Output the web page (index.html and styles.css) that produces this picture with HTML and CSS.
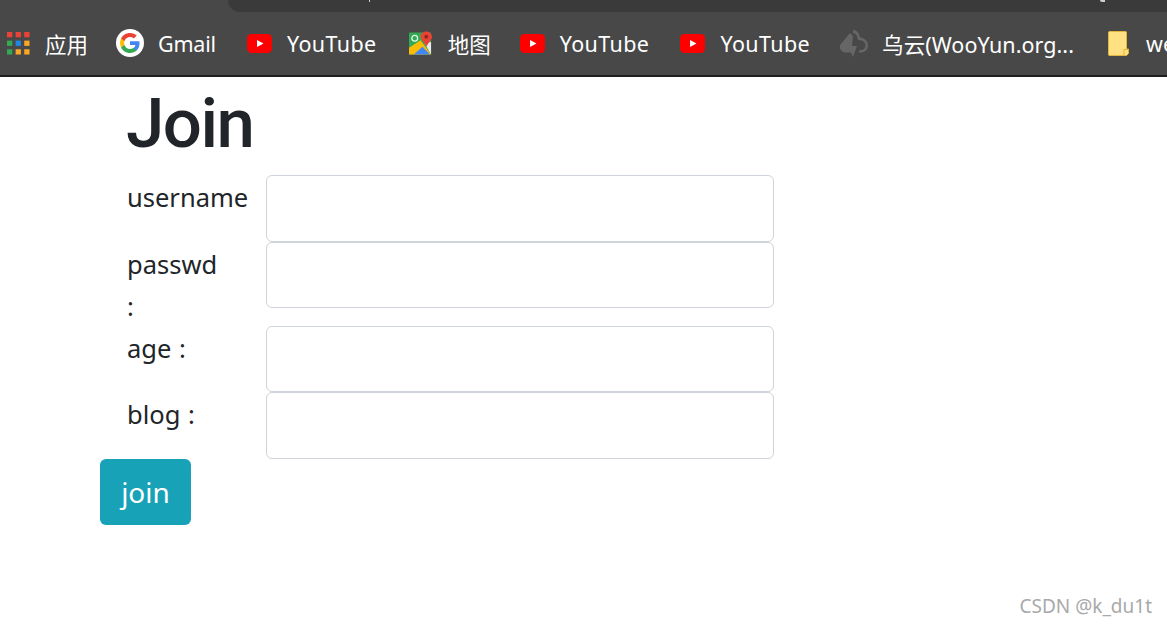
FILE: index.html
```html
<!DOCTYPE html>
<html lang="zh">
<head>
<meta charset="utf-8">
<title>Join</title>
<link rel="stylesheet" href="styles.css">
</head>
<body>
<header class="chrome">
  <div class="topline">
    <div class="address">
      <span class="mark mark-a"></span>
      <span class="mark mark-b"></span>
    </div>
  </div>
  <nav class="bookmarks">
    <a class="bm bm-apps">
      <svg class="ico-apps" viewBox="0 0 24 24" width="23" height="23">
        <g>
          <rect x="0" y="0" width="5.5" height="5.5" fill="#ea4335"/><rect x="9" y="0" width="5.5" height="5.5" fill="#ea4335"/><rect x="18" y="0" width="5.5" height="5.5" fill="#ea4335"/>
          <rect x="0" y="9" width="5.5" height="5.5" fill="#34a853"/><rect x="9" y="9" width="5.5" height="5.5" fill="#1e88e5"/><rect x="18" y="9" width="5.5" height="5.5" fill="#f9a825"/>
          <rect x="0" y="18" width="5.5" height="5.5" fill="#34a853"/><rect x="9" y="18" width="5.5" height="5.5" fill="#f9a825"/><rect x="18" y="18" width="5.5" height="5.5" fill="#f9a825"/>
        </g>
      </svg>
      <span>应用</span>
    </a>
    <a class="bm bm-gmail">
      <svg viewBox="0 0 28 28" width="28" height="28">
        <circle cx="14" cy="14" r="14" fill="#fff"/>
        <path d="M23.500 14.200c0-.7-.1-1.400-.2-2H14v3.800h5.400c-.2 1.200-.9 2.300-2 3v2.500h3.200c1.900-1.700 2.900-4.300 2.900-7.300z" fill="#4285f4"/>
        <path d="M14 24c2.700 0 4.900-.9 6.600-2.500l-3.200-2.500c-.9.600-2 1-3.400 1-2.600 0-4.800-1.800-5.600-4.100H5.100v2.600C6.700 21.800 10.100 24 14 24z" fill="#34a853"/>
        <path d="M8.400 15.900c-.4-1.200-.4-2.600 0-3.800V9.500H5.100c-1.400 2.800-1.400 6.200 0 9l3.300-2.600z" fill="#fbbc05"/>
        <path d="M14 8c1.500 0 2.800.5 3.800 1.500l2.900-2.900C19 5 16.700 4 14 4 10.100 4 6.700 6.200 5.100 9.500l3.300 2.600C9.200 9.800 11.400 8 14 8z" fill="#ea4335"/>
      </svg>
      <span>Gmail</span>
    </a>
    <a class="bm bm-yt1">
      <svg viewBox="0 0 25 19" width="25" height="19"><rect width="25" height="19" rx="4.500" fill="#f00"/><path d="M10 6l6.500 3.500L10 13z" fill="#fff"/></svg>
      <span>YouTube</span>
    </a>
    <a class="bm bm-maps">
      <svg viewBox="0 0 24 24" width="23" height="24">
        <rect y="1" width="23" height="23" rx="1" fill="#34a853"/>
        <path d="M0 24V17L12 9l11 15z" fill="#fbbc05"/>
        <path d="M5 24l9-8 8 8z" fill="#4285f4"/>
        <path d="M16 12l7 12V11z" fill="#e8e8e8"/>
        <circle cx="6" cy="7" r="3" fill="none" stroke="#dfe" stroke-width="1.300"/>
        <path d="M18 0c3 0 6 2.300 6 5.500 0 3-3 5-6 10.500-2-5.500-6-7.500-6-10.500C12 2.300 15 0 18 0z" fill="#ea4335"/>
        <circle cx="18" cy="5.500" r="2" fill="#8c2b20"/>
      </svg>
      <span>地图</span>
    </a>
    <a class="bm bm-yt2">
      <svg viewBox="0 0 25 19" width="25" height="19"><rect width="25" height="19" rx="4.500" fill="#f00"/><path d="M10 6l6.500 3.500L10 13z" fill="#fff"/></svg>
      <span>YouTube</span>
    </a>
    <a class="bm bm-yt3">
      <svg viewBox="0 0 25 19" width="25" height="19"><rect width="25" height="19" rx="4.500" fill="#f00"/><path d="M10 6l6.500 3.500L10 13z" fill="#fff"/></svg>
      <span>YouTube</span>
    </a>
    <a class="bm bm-wooyun">
      <svg viewBox="0 0 28 27" width="28" height="27">
        <path d="M13 0c3 0 5.500 2 6.500 5.500 0 1 .5 2 1.500 2 3.500 1 7 3.500 7 8 0 4-3 7-7 7h-2.500l1-2.500H21c2.500 0 4.500-2 4.500-4.500s-2-5-5.500-5.300l-2-.2-.500-2.500c-.7-2.500-2-4-4.500-4.500z" fill="#666"/>
        <path d="M10 3L0 15c-1 3 1 7 5 7.500h6l2 4.500 4-11h-5l1-10z" fill="#666"/>
      </svg>
      <span>乌云(WooYun.org...</span>
    </a>
    <a class="bm bm-folder">
      <svg viewBox="0 0 21 25" width="21" height="25">
        <path d="M1.500.500h16a1 1 0 0 1 1 1V18h2v4.500l-2 2h-17a1 1 0 0 1-1-1v-22a1 1 0 0 1 1-1z" fill="#ffe083" stroke="#e0b63c"/>
        <path d="M16 24v-5.500h4.500" fill="#ffe083" stroke="#e0b63c"/>
      </svg>
      <span>web</span>
    </a>
  </nav>
</header>

<main class="page">
  <h1 class="title">Join</h1>
  <form class="join-form">
    <div class="row row-first">
      <label class="field-label">username</label>
      <input class="field-input" type="text">
    </div>
    <div class="row">
      <label class="field-label">passwd :</label>
      <input class="field-input" type="password">
    </div>
    <div class="row">
      <label class="field-label">age :</label>
      <input class="field-input" type="text">
    </div>
    <div class="row">
      <label class="field-label">blog :</label>
      <input class="field-input" type="text">
    </div>
    <button class="join-btn" type="button">join</button>
  </form>
</main>

<div class="watermark">CSDN @k_du1t</div>
</body>
</html>
```
FILE: styles.css
```css
* { box-sizing: border-box; }
html, body { margin: 0; padding: 0; height: 626px; overflow: hidden; background: #fff; }
body { font-family: "Noto Sans", "Noto Sans CJK SC", sans-serif; color: #212529; position: relative; }

.chrome { height: 77px; background: #484848; border-bottom: 2px solid #1e1e1e; display: flex; flex-direction: column; overflow: hidden; }
.topline { height: 12px; padding-left: 228px; flex: none; }
.address { height: 12px; background: #3a3a3a; border-bottom-left-radius: 14px; position: relative; }
.mark { position: absolute; top: 0; background: #cfcfcf; }
.mark-a { left: 141px; width: 1px; height: 2px; }
.mark-b { left: 872px; width: 5px; height: 2px; border-bottom-left-radius: 3px; }

.bookmarks { height: 63px; display: flex; align-items: center; padding-bottom: 1px; white-space: nowrap; }
.bm { display: flex; align-items: center; gap: 14px; color: #fff; font-size: 21.500px; flex: none; }
.bm svg { display: block; flex: none; }
.bm-apps { margin-left: 7px; gap: 15px; }
.bm-gmail { margin-left: 28px; letter-spacing: -0.200px; }
.bm-yt1, .bm-yt2, .bm-yt3 { letter-spacing: 0.400px; gap: 15px; }
.bm-yt1 { margin-left: 31px; }
.bm-maps { margin-left: 32px; gap: 16px; }
.bm-yt2 { margin-left: 29px; }
.bm-yt3 { margin-left: 31px; }
.bm-wooyun { margin-left: 30px; letter-spacing: 0.050px; }
.bm-folder { margin-left: 34px; gap: 17px; }

.page { padding-left: 100px; }
.title { margin: 0; padding-left: 26px; height: 98px; font-family: Roboto, "Noto Sans", sans-serif; font-size: 69px; line-height: 94px; font-weight: 500; letter-spacing: -1.500px; color: #212529; }
.join-form { display: flex; flex-direction: column; align-items: flex-start; }
.row { display: flex; align-items: flex-start; }
.field-label { width: 166px; padding: 1px 46px 0 27px; font-size: 25.500px; line-height: 42px; word-spacing: 1px; }
.field-input { display: block; width: 508px; height: 66.500px; padding: 0 14px; background: #fff; border: 1px solid #ced4da; border-radius: 6px; outline: none; }
.row:nth-child(2) .field-label { height: 84px; }
.join-btn { height: 66px; width: 91px; margin: 0; padding: 0; border: 0; border-radius: 6px; background: #17a2b8; color: #fff; font: 28px/42px "Noto Sans", sans-serif; }

.watermark { position: absolute; right: 15px; top: 593px; font-size: 19px; line-height: 26px; color: #a9a9a9; }
```
